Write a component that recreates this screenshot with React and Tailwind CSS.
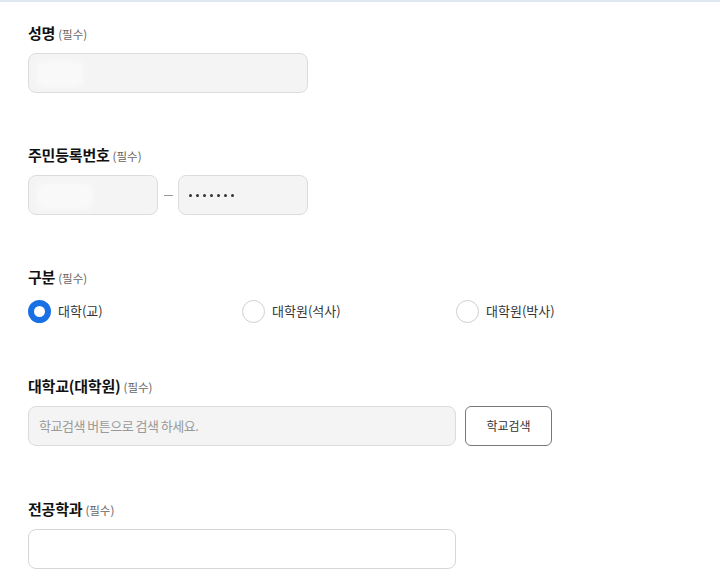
import React, { useState } from 'react';

const font = { fontFamily: '"Noto Sans CJK KR", "Noto Sans", sans-serif' };

const Label = ({ children }) => (
  <div className="flex items-baseline h-5 mb-[10px]">
    <span className="text-[15px] font-bold text-[#111] tracking-[-0.2px] leading-5">{children}</span>
    <span className="ml-[3px] text-[11.5px] text-[#666]">(필수)</span>
  </div>
);

const Masked = ({ w }) => (
  <div className={`absolute left-2 top-[7px] ${w} h-[26px] bg-[#f9f9f9] blur-[3px] rounded`} />
);

const Radio = ({ checked, label, onClick }) => (
  <button type="button" onClick={onClick} className="flex items-center w-[214px] h-[22px]">
    {checked ? (
      <span className="w-[23px] h-[23px] rounded-full border-[6px] border-[#1871e4] bg-white shrink-0" />
    ) : (
      <span className="w-[23px] h-[23px] rounded-full border border-[#cfcfcf] bg-white shrink-0" />
    )}
    <span className="ml-[7px] text-[13px] text-[#333]">{label}</span>
  </button>
);

export default function App() {
  const [type, setType] = useState(0);
  const types = ['대학(교)', '대학원(석사)', '대학원(박사)'];

  return (
    <div style={font} className="w-[720px] h-[572px] bg-white border-t-2 border-[#dfe7f1] overflow-hidden">
      <div className="pl-7 pt-[21px]">
        <div>
          <Label>성명</Label>
          <div className="relative w-[280px] h-10 bg-[#f4f4f4] border border-[#dcdcdc] rounded-lg">
            <Masked w="w-[46px]" />
          </div>
        </div>

        <div className="mt-[52px]">
          <Label>주민등록번호</Label>
          <div className="flex items-center">
            <div className="relative w-[130px] h-10 bg-[#f4f4f4] border border-[#dcdcdc] rounded-lg">
              <Masked w="w-[56px]" />
            </div>
            <span className="w-[20px] flex justify-center">
              <span className="block w-[9px] h-px bg-[#999]" />
            </span>
            <div className="w-[130px] h-10 bg-[#f4f4f4] border border-[#dcdcdc] rounded-lg flex items-center pl-[10px] gap-[4px]">
              {[0, 1, 2, 3, 4, 5, 6].map((i) => (
                <span key={i} className="w-[3px] h-[3px] rounded-full bg-[#333]" />
              ))}
            </div>
          </div>
        </div>

        <div className="mt-[52px]">
          <Label>구분</Label>
          <div className="flex mt-[13px]">
            {types.map((t, i) => (
              <Radio key={t} label={t} checked={type === i} onClick={() => setType(i)} />
            ))}
          </div>
        </div>

        <div className="mt-[54px]">
          <Label>대학교(대학원)</Label>
          <div className="flex items-center gap-[9px]">
            <div className="w-[428px] h-10 bg-[#f4f4f4] border border-[#dcdcdc] rounded-lg flex items-center pl-[10px]">
              <span className="text-[13px] text-[#999] tracking-[-0.5px]">학교검색 버튼으로 검색 하세요.</span>
            </div>
            <button type="button" className="w-[87px] h-10 border border-[#777] rounded-md bg-white text-[12px] text-[#333]">
              학교검색
            </button>
          </div>
        </div>

        <div className="mt-[53px]">
          <Label>전공학과</Label>
          <div className="w-[428px] h-10 bg-white border border-[#d6d6d6] rounded-lg" />
        </div>
      </div>
    </div>
  );
}
